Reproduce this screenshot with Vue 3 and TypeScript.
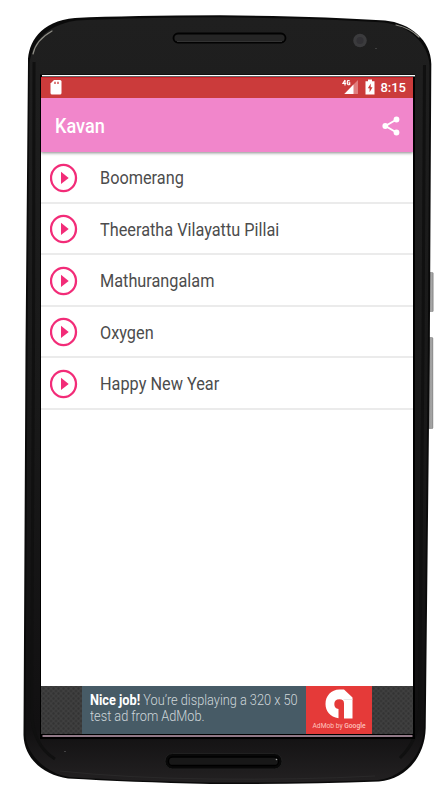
<script setup lang="ts">
interface Song {
  id: number
  title: string
}

const songs: Song[] = [
  { id: 1, title: 'Boomerang' },
  { id: 2, title: 'Theeratha Vilayattu Pillai' },
  { id: 3, title: 'Mathurangalam' },
  { id: 4, title: 'Oxygen' },
  { id: 5, title: 'Happy New Year' },
]
</script>

<template>
  <main class="stage">
    <svg class="phone" viewBox="0 0 444 800" aria-hidden="true">
      <defs>
        <linearGradient id="shell" x1="0" y1="0" x2="0" y2="1">
          <stop offset="0" stop-color="#1f1f1f" />
          <stop offset=".5" stop-color="#191919" />
          <stop offset=".93" stop-color="#111011" />
          <stop offset="1" stop-color="#232122" />
        </linearGradient>
        <linearGradient id="key" x1="0" y1="0" x2="1" y2="0">
          <stop offset="0" stop-color="#777" />
          <stop offset=".6" stop-color="#aaa" />
          <stop offset="1" stop-color="#858585" />
        </linearGradient>
      </defs>
      <rect x="428" y="272" width="5.500" height="40" rx="1.500" fill="url(#key)" />
      <rect x="428" y="337" width="5.200" height="92" rx="1.500" fill="url(#key)" />
      <path fill="#0a0a0a" d="M28 62C28 43 40 21 75 18Q130 15.500 220 15.300Q320 16 385 20.500C410 23 431 40 431.300 64L429.800 350L425.700 728C425 758 405 779 379 781.500Q300 784.500 210 784Q130 782 68 778.500C43 775 24 758 23.500 735L25.500 350Z" />
      <path fill="url(#shell)" d="M29.500 64C31 46 43 25 77 20.500Q140 17.500 220 17.300Q320 18.500 384 22.500C407 25 429 43 429.500 66L427.800 350L424 728C423 755 403 777 378 780Q300 783 210 782.500Q130 781 69 777C46 773 26 755 25.500 733L27.500 350Z" />
      <path fill="none" stroke="#101010" stroke-width="3" d="M34 62L33.500 350L31.500 710Q32 745 55 759M424.500 65L423 350L419.500 710Q419 740 400 758" />
      <path fill="none" stroke="#8e8d85" stroke-width="1.200" stroke-linecap="round" d="M33 54Q36 40 52 31M396 25Q410 28 419 37" />
      <path fill="none" stroke="#363636" stroke-width="1" d="M60 771Q125 778 210 779Q300 780 375 776" opacity=".4" />
      <rect x="173.500" y="33.500" width="112" height="9" rx="4.500" fill="#252525" stroke="#020202" stroke-width="1.800" />
      <path stroke="#3c3c3c" stroke-width=".8" d="M177 41.500H282" />
      <rect x="165" y="753.500" width="117" height="15.500" rx="7.500" fill="#080808" stroke="#202020" />
      <rect x="168.500" y="757" width="110" height="8.500" rx="4" fill="#181818" stroke="#000" stroke-width="1.300" />
      <circle cx="360" cy="40.500" r="6.800" fill="#3b3b3d" />
      <circle cx="360" cy="40.500" r="3.500" fill="#323135" />
      <circle cx="276.500" cy="759.500" r=".8" fill="#aaa" />
      <circle cx="376" cy="48.500" r=".5" fill="#777" />
      <circle cx="65" cy="751.500" r=".6" fill="#777" />
      <rect x="40" y="74.500" width="375" height="664.500" fill="#000" />
      <rect x="42" y="75" width="373" height="1.400" fill="#fff" />
      <rect x="42.500" y="735" width="370" height="2" fill="#917987" />
    </svg>

    <section class="screen">
      <header class="status">
        <svg class="sd" viewBox="0 0 12 16"><path fill="#fff" d="M4 1H10Q11.500 1 11.500 2.500V14Q11.500 15.500 10 15.500H2Q.5 15.500.5 14V4.500Z" /><path stroke="#cb3b3b" stroke-width="1.300" d="M5 2.800V5M8 2.800V5" /></svg>
        <svg class="signal" viewBox="0 0 17 16"><path fill="#e07f7f" d="M16 1V15H2Z" /><path fill="#fff" d="M11.500 5.500V15H2.500Z" /><path fill="none" stroke="#fff" stroke-width="1.200" d="M3 1V6.500M3 1L.8 4.500H4.200M7.800 2Q5.300.5 5.300 3.500T7.700 5.500V3.900H6.500" /></svg>
        <svg class="battery" viewBox="0 0 10 16"><path fill="#fff" d="M3 .5H7V2.200H9.500V15.500H.5V2.200H3Z" /><path fill="#cb3b3b" d="M5.800 4.500L2.800 9.300H4.600V13.300L7.500 8.300H5.700Z" /></svg>
        <span class="clock">8:15</span>
      </header>
      <header class="appbar">
        <h1>Kavan</h1>
        <svg class="share" viewBox="0 0 18 20"><path fill="none" stroke="#fff" stroke-width="1.900" d="M14.500 3.500L3.500 10L14.500 16.500" /><g fill="#fff"><circle cx="14.500" cy="3.500" r="2.900" /><circle cx="3.300" cy="10" r="2.900" /><circle cx="14.500" cy="16.500" r="2.900" /></g></svg>
      </header>
      <ul class="songs">
        <li v-for="song in songs" :key="song.id">
          <svg class="play" viewBox="0 0 28 30"><ellipse cx="13.500" cy="15" rx="12.500" ry="13.200" fill="none" stroke="#f22c78" stroke-width="2.300" /><path fill="#f22c78" d="M11 8.800L18.700 14.900L11 21Z" /></svg>
          <span>{{ song.title }}</span>
        </li>
      </ul>
      <footer class="banner">
        <p class="copy"><span><b>Nice job!</b> You’re displaying a 320 x 50<br />test ad from AdMob.</span></p>
        <div class="brand">
          <svg viewBox="0 0 28 30"><path fill="#fff" d="M14.500.5H19L27.500 8.500V29.500H19V14.500Q19 10.300 14.500 10.300Q9.300 10.300 9.300 15Q9.300 19.500 13.500 20V29.300C5 28 .5 22 .5 15C.5 7 6 .5 14.500.5Z" /><path fill="#dedede" d="M18.500 10H27.500V10.700H18.500Z" /></svg>
          <small>AdMob by <b>Google</b></small>
        </div>
      </footer>
    </section>
  </main>
</template>

<style>
body {
  background: #fff;
}
</style>

<style scoped>
.stage {
  display: grid;
  width: 444px;
  height: 800px;
  overflow: hidden;
  font-family: Roboto, sans-serif;
}
.phone,
.screen {
  grid-area: 1 / 1;
}
.phone {
  width: 444px;
  height: 800px;
}
.screen {
  z-index: 1;
  display: flex;
  flex-direction: column;
  width: 372px;
  height: 657px;
  margin: 77px 0 0 41px;
  background: #fff;
}
.status {
  display: flex;
  flex: 0 0 21px;
  align-items: center;
  box-sizing: border-box;
  padding: 0 7px 0 9.5px;
  color: #fff;
  background: #cb3b3b;
  border-top: 1px solid #cf1f27;
}
.status svg {
  margin-top: -2px;
}
.status .sd {
  width: 12px;
  height: 16px;
  margin-right: auto;
  margin-left: -1px;
}
.signal {
  width: 17px;
  height: 16px;
}
.status .battery {
  width: 10px;
  height: 16px;
  margin-right: 5.5px;
  margin-left: 6px;
}
.clock {
  font-size: 13px;
  font-weight: 500;
  line-height: 20px;
}
.appbar {
  z-index: 1;
  display: flex;
  flex: 0 0 54px;
  align-items: center;
  justify-content: space-between;
  box-sizing: border-box;
  padding: 1px 13px 0 13.5px;
  color: #fff;
  background: #f186cb;
  box-shadow: 0 1px 3px #0007;
  clip-path: inset(0 0 -5px 0);
}
h1 {
  margin: 2px 0 0;
  font-size: 19.5px;
  font-weight: 500;
  transform: scaleX(0.93);
  transform-origin: left;
}
.share {
  width: 18px;
  height: 20px;
}
.songs {
  flex: 1;
  margin: 0;
  padding: 0;
  list-style: none;
}
.songs li {
  display: flex;
  gap: 21.5px;
  align-items: center;
  box-sizing: border-box;
  height: 51.5px;
  padding-left: 9px;
  color: #4c4c4c;
  font-size: 17.6px;
  border-bottom: 2px solid #ebebeb;
}
.songs span {
  padding-top: 3px;
  transform: scaleX(0.925);
  transform-origin: left;
}
.play {
  width: 28px;
  height: 30px;
  margin-top: 1.5px;
}
.banner {
  display: flex;
  flex: 0 0 48px;
  justify-content: center;
  background:
    radial-gradient(circle, #333 0.8px, transparent 1.6px) 0 0 / 5px 5px,
    radial-gradient(circle, #333 0.8px, transparent 1.6px) 2.5px 2.5px / 5px 5px,
    #404040;
}
.copy {
  box-sizing: border-box;
  width: 224px;
  margin: 0;
  padding: 6px 0 0 8px;
  color: #cfd7da;
  font-size: 14px;
  font-weight: 300;
  line-height: 16px;
  white-space: nowrap;
  background: #475b66;
}
.copy span {
  display: inline-block;
  transform: scaleX(0.91);
  transform-origin: left;
}
.copy b {
  color: #fff;
  font-weight: 700;
}
.brand {
  display: flex;
  flex-direction: column;
  gap: 3px;
  align-items: center;
  box-sizing: border-box;
  width: 66px;
  padding-top: 3px;
  color: #ffc4bf;
  background: #e53a39;
}
.brand svg {
  width: 28px;
  height: 30px;
}
.brand small {
  font-size: 6.7px;
  line-height: 8px;
  white-space: nowrap;
}
.brand b {
  font-weight: 500;
}
</style>
